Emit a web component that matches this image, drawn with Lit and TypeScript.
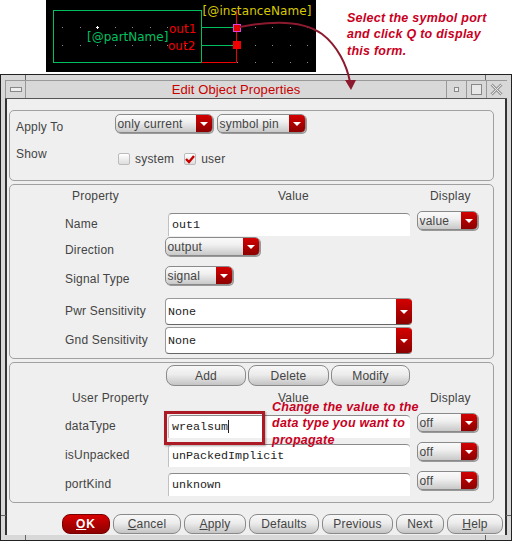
import { LitElement, html, css, svg } from 'lit'
import { customElement } from 'lit/decorators.js'

const dots: [number, number][] = []
for (const y of [27, 45, 62]) {
  for (let x = 16; x < 268; x += 17.5) {
    if (y === 62 && x < 190) continue
    dots.push([Math.round(x), y])
  }
}

@customElement('app-root')
export class AppRoot extends LitElement {
  static styles = css`
    :host {
      display: block;
      position: relative;
      width: 518px;
      height: 544px;
      overflow: hidden;
      background: #fff;
      color: #444;
      font: 12px/16px 'Liberation Sans', Arial, sans-serif;
      letter-spacing: 0.2px;
    }
    .canvas {
      display: block;
      margin-left: 46px;
      background: #000;
    }
    .window {
      box-sizing: border-box;
      position: relative;
      width: 512px;
      height: 467px;
      margin-top: 2px;
      border: 1px solid #222;
      background: #d8d8d8;
      padding: 5px 4px;
      display: flex;
      flex-direction: column;
    }
    .tick {
      position: absolute;
      background: #666;
    }
    .tick-v {
      width: 1px;
      height: 5px;
    }
    .tick-h {
      width: 5px;
      height: 1px;
    }
    .t-tl {
      left: 24px;
      top: 0;
    }
    .t-tr {
      left: 484px;
      top: 0;
    }
    .t-bl {
      left: 24px;
      bottom: 0;
    }
    .t-br {
      left: 484px;
      bottom: 0;
    }
    .t-ls {
      left: 0;
      top: 440px;
    }
    .t-rs {
      right: 0;
      top: 440px;
    }
    .titlebar {
      box-sizing: border-box;
      display: flex;
      height: 19px;
      flex: none;
      padding-right: 1px;
      border-top: 1px solid #999;
      border-bottom: 1px solid #555;
    }
    .tcell {
      display: flex;
      align-items: center;
      justify-content: center;
      flex: none;
      width: 19px;
      border-left: 1px solid #999;
    }
    .title {
      flex: 1;
      text-align: center;
      color: #c80000;
      font-size: 13px;
      line-height: 18px;
      border-left: 1px solid #999;
      letter-spacing: 0.1px;
    }
    .menu-glyph {
      width: 10px;
      height: 3px;
      border: 1px solid #888;
      background: #eee;
    }
    .min-glyph {
      width: 3px;
      height: 3px;
      border: 1px solid #888;
      background: #eee;
    }
    .max-glyph {
      width: 9px;
      height: 9px;
      border: 1px solid #888;
      background: #e8e8e8;
    }
    .body {
      flex: 1;
      background: #efefef;
      border-left: 2px solid #333;
      border-right: 2px solid #333;
      padding: 11px 11px 0 2px;
    }
    .group {
      box-sizing: border-box;
      border: 1px solid #a0a0a0;
      border-radius: 5px;
      margin-bottom: 3px;
    }
    .g1 {
      height: 71px;
      padding: 3px 0 0 6px;
    }
    .g2 {
      height: 175px;
      padding: 3px 0 0 55px;
    }
    .g3 {
      height: 141px;
      padding: 2px 0 0 55px;
    }
    .row {
      display: flex;
      align-items: flex-start;
    }
    .label {
      flex: none;
      width: 100px;
      margin-top: 5px;
    }
    .g1 .label {
      width: 99px;
    }
    .heads {
      display: flex;
      height: 16px;
      margin-bottom: 7px;
    }
    .heads span {
      flex: none;
    }
    .h-name {
      margin-left: 7px;
      width: 206px;
    }
    .h-value {
      width: 152px;
    }
    .dd {
      box-sizing: border-box;
      display: flex;
      flex: none;
      height: 19px;
      border: 1px solid #8a8a8a;
      border-radius: 5px;
      background: linear-gradient(#fafafa, #f0f0f0 40%, #c8c8c8);
      overflow: hidden;
      box-shadow: 1px 1px 0 #999;
    }
    .dd span {
      flex: 1;
      padding: 1px 0 0 1.5px;
      line-height: 16px;
      white-space: nowrap;
    }
    .arrow {
      flex: none;
      width: 16px;
      display: flex;
      align-items: center;
      justify-content: center;
      background: linear-gradient(#d40000, #a80000 60%, #8c0000);
    }
    .arrow i {
      display: block;
      width: 0;
      height: 0;
      border-left: 4px solid transparent;
      border-right: 4px solid transparent;
      border-top: 4px solid #fff;
    }
    .field {
      box-sizing: border-box;
      flex: none;
      height: 23px;
      background: #fff;
      border-top: 1px solid #8a8a8a;
      border-left: 1px solid #c0c0c0;
      border-radius: 4px 4px 0 0;
      padding: 3px 0 0 3px;
      font: 11.7px/16px 'Liberation Mono', 'Courier New', monospace;
      letter-spacing: 0;
      color: #222;
    }
    .value {
      margin: 2px 7px 0 3px;
      width: 242px;
    }
    .combo {
      box-sizing: border-box;
      display: flex;
      flex: none;
      width: 247px;
      height: 27px;
      background: #fff;
      border: 1px solid #999;
      border-width: 1px 0 1px 1px;
      border-bottom-color: #666;
      border-radius: 4px;
      overflow: hidden;
    }
    .combo .text {
      flex: 1;
      padding: 5px 0 0 2px;
      font: 11.7px/16px 'Liberation Mono', 'Courier New', monospace;
      letter-spacing: 0;
      color: #222;
    }
    .g1-second {
      margin-left: 4px;
    }
    .show {
      margin-top: 11px;
    }
    .show .label {
      margin-top: 0;
    }
    .checks {
      display: flex;
      align-items: center;
      margin: 5px 0 0 3px;
    }
    .box {
      box-sizing: border-box;
      width: 12px;
      height: 12px;
      border: 1px solid #bbb;
      border-radius: 2px;
      background: linear-gradient(#fff, #ddd);
      margin-right: 5px;
    }
    .box svg {
      display: block;
    }
    .checks span {
      margin-right: 10px;
    }
    .pair {
      margin-bottom: 4px;
      height: 25px;
    }
    .g2 .gap-tight {
      margin-bottom: 1px;
    }
    .g2 .gap-wide {
      margin-bottom: 8px;
    }
    .g2 .gap-wider {
      margin-bottom: 11px;
    }
    .g2 .gap-combo {
      margin-bottom: 2px;
    }
    .actions {
      display: flex;
      gap: 2px;
      margin: 0 0 4px 101px;
      height: 21px;
    }
    .btn {
      box-sizing: border-box;
      flex: none;
      height: 100%;
      border: 1px solid #8a8a8a;
      border-radius: 8px;
      background: linear-gradient(#f8f8f8, #ececec 45%, #c4c4c4);
      text-align: center;
      line-height: 19px;
    }
    .btn u {
      text-underline-offset: 1px;
    }
    .g3 .btn {
      line-height: 20px;
    }
    .footer {
      display: flex;
      height: 20px;
      margin: 11px 0 0 53px;
      gap: 3px;
    }
    .ok {
      background: linear-gradient(#d80000, #b00000 50%, #8e0000);
      border-color: #700;
      color: #fff;
      font-weight: bold;
      letter-spacing: 1px;
    }
    .mark {
      position: absolute;
      left: 164px;
      top: 411px;
      box-sizing: border-box;
      width: 101px;
      height: 34px;
      border: 3px solid #ac1a26;
      box-shadow: 1px 1px 2px rgba(0, 0, 0, 0.35);
    }
    .caret {
      display: inline-block;
      width: 1px;
      height: 13px;
      background: #222;
      vertical-align: -3px;
    }
    .note {
      position: absolute;
      color: #c8001e;
      font: italic bold 12.5px/16.3px 'Liberation Sans', Arial, sans-serif;
      letter-spacing: 0.25px;
      white-space: nowrap;
    }
    .note-a {
      left: 347px;
      top: 10px;
    }
    .note-b {
      left: 272px;
      top: 399px;
    }
    .swoop {
      position: absolute;
      left: 0;
      top: 0;
      pointer-events: none;
    }
  `

  dropdown(text: string, width: number, extra = '') {
    return html`<div class="dd ${extra}" style="width:${width}px">
      <span>${text}</span>
      <div class="arrow"><i></i></div>
    </div>`
  }

  combo(text: string) {
    return html`<div class="combo">
      <div class="text">${text}</div>
      <div class="arrow"><i></i></div>
    </div>`
  }

  btn(label: unknown, width: number, extra = '') {
    return html`<div class="btn ${extra}" style="width:${width}px">${label}</div>`
  }

  renderCanvas() {
    return html`<svg class="canvas" width="270" height="72" viewBox="0 0 270 72">
      ${dots.map(([x, y]) => svg`<rect x=${x} y=${y} width="1" height="1" fill="#8a8a98"></rect>`)}
      <path d="M51.5 26V29M50 27.5H53" stroke="#fff"></path>
      <g fill="none" stroke="#00c060">
        <rect x="7.5" y="10.5" width="148" height="52"></rect>
        <path d="M155.5 27.5H190M155.5 45.5H190"></path>
      </g>
      <path d="M190.5 10V62.5M155.5 62.5H190.5" fill="none" stroke="#f00000"></path>
      <rect x="187.5" y="24.5" width="7" height="7" fill="#e00000" stroke="#e040e0"></rect>
      <rect x="187" y="41" width="8" height="8" fill="#f00000"></rect>
      <g font-family="'DejaVu Sans', sans-serif" font-size="12" letter-spacing="0">
        <text x="41" y="41" fill="#00c060">[@partName]</text>
        <text x="123" y="33" fill="#f00000">out1</text>
        <text x="122" y="50" fill="#f00000">out2</text>
        <text x="156.5" y="15" fill="#d8c800" letter-spacing="0.1">[@instanceName]</text>
      </g>
    </svg>`
  }

  render() {
    return html`
      ${this.renderCanvas()}
      <div class="window">
        <i class="tick tick-v t-tl"></i>
        <i class="tick tick-v t-tr"></i>
        <i class="tick tick-v t-bl"></i>
        <i class="tick tick-v t-br"></i>
        <i class="tick tick-h t-ls"></i>
        <i class="tick tick-h t-rs"></i>
        <div class="titlebar">
          <div class="tcell"><div class="menu-glyph"></div></div>
          <div class="title">Edit Object Properties</div>
          <div class="tcell"><div class="min-glyph"></div></div>
          <div class="tcell"><div class="max-glyph"></div></div>
          <div class="tcell">
            <svg width="13" height="13" viewBox="0 0 13 13">
              <path d="M1.5 1.5L11.5 11.5M11.5 1.5L1.5 11.5" stroke="#999" stroke-width="3"></path>
              <path d="M1.5 1.5L11.5 11.5M11.5 1.5L1.5 11.5" stroke="#e8e8e8" stroke-width="1"></path>
            </svg>
          </div>
        </div>
        <div class="body">
          <div class="group g1">
            <div class="row">
              <div class="label">Apply To</div>
              ${this.dropdown('only current', 98)}
              ${this.dropdown('symbol pin', 89, 'g1-second')}
            </div>
            <div class="row show">
              <div class="label">Show</div>
              <div class="checks">
                <div class="box"></div>
                <span>system</span>
                <div class="box">
                  <svg width="10" height="10" viewBox="0 0 10 10">
                    <path d="M1 5L4 8L9 2" fill="none" stroke="#c80000" stroke-width="2.4"></path>
                  </svg>
                </div>
                <span>user</span>
              </div>
            </div>
          </div>
          <div class="group g2">
            <div class="heads">
              <span class="h-name">Property</span>
              <span class="h-value">Value</span>
              <span>Display</span>
            </div>
            <div class="row gap-tight">
              <div class="label">Name</div>
              <div class="field value">out1</div>
              ${this.dropdown('value', 61)}
            </div>
            <div class="row gap-wide">
              <div class="label">Direction</div>
              ${this.dropdown('output', 95)}
            </div>
            <div class="row gap-wider">
              <div class="label">Signal Type</div>
              ${this.dropdown('signal', 68)}
            </div>
            <div class="row gap-combo">
              <div class="label">Pwr Sensitivity</div>
              ${this.combo('None')}
            </div>
            <div class="row">
              <div class="label">Gnd Sensitivity</div>
              ${this.combo('None')}
            </div>
          </div>
          <div class="group g3">
            <div class="actions">
              ${this.btn('Add', 80)}
              ${this.btn('Delete', 81)}
              ${this.btn('Modify', 79)}
            </div>
            <div class="heads">
              <span class="h-name">User Property</span>
              <span class="h-value">Value</span>
              <span>Display</span>
            </div>
            <div class="row pair">
              <div class="label">dataType</div>
              <div class="field value">wrealsum<span class="caret"></span></div>
              ${this.dropdown('off', 61)}
            </div>
            <div class="row pair">
              <div class="label">isUnpacked</div>
              <div class="field value">unPackedImplicit</div>
              ${this.dropdown('off', 61)}
            </div>
            <div class="row pair">
              <div class="label">portKind</div>
              <div class="field value">unknown</div>
              ${this.dropdown('off', 61)}
            </div>
          </div>
          <div class="footer">
            ${this.btn(html`<u>O</u>K`, 48, 'ok')}
            ${this.btn(html`<u>C</u>ancel`, 68)}
            ${this.btn(html`<u>A</u>pply`, 62)}
            ${this.btn('Defaults', 70)}
            ${this.btn('Previous', 71)}
            ${this.btn('Next', 48)}
            ${this.btn(html`<u>H</u>elp`, 56)}
          </div>
        </div>
      </div>
      <div class="mark"></div>
      <div class="note note-a">Select the symbol port<br />and click Q to display<br />this form.</div>
      <div class="note note-b">Change the value to the<br />data type you want to<br />propagate</div>
      <svg class="swoop" width="518" height="544" viewBox="0 0 518 544">
        <path d="M240 27C265 22 300 18 322 34C338 46 347 66 350 82" fill="none" stroke="#8c1a2e" stroke-width="2"></path>
        <path d="M345 80L356 80L351 90Z" fill="#8c1a2e"></path>
      </svg>
    `
  }
}
